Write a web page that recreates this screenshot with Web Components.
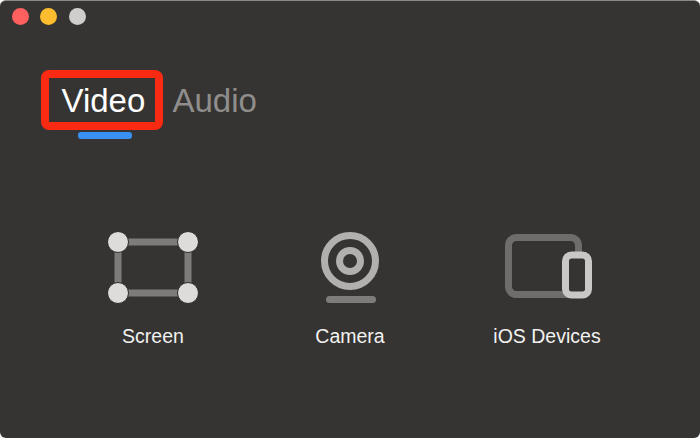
<!DOCTYPE html>
<html lang="en">
<head>
<meta charset="utf-8">
<title>Video</title>
<style>
  html, body { margin: 0; padding: 0; background: #fff; }
</style>
</head>
<body>
<app-window>
  <media-tabs slot="tabs">
    <media-tab active>Video</media-tab>
    <media-tab>Audio</media-tab>
  </media-tabs>
  <source-card label="Screen">
    <svg width="100" height="80" viewBox="0 0 100 80" fill="none">
      <rect x="15" y="15" width="70" height="51" stroke="#7d7c7a" stroke-width="7"/>
      <g fill="#dddcdb" stroke="#2c2b29" stroke-width="1">
        <circle cx="15" cy="15" r="10.5"/>
        <circle cx="85" cy="15" r="10.5"/>
        <circle cx="15" cy="66" r="10.5"/>
        <circle cx="85" cy="66" r="10.5"/>
      </g>
    </svg>
  </source-card>
  <source-card label="Camera">
    <svg width="100" height="80" viewBox="0 0 100 80" fill="none">
      <circle cx="50" cy="34" r="25.5" stroke="#b1b0ae" stroke-width="7"/>
      <circle cx="50" cy="34" r="10.5" stroke="#b1b0ae" stroke-width="7"/>
      <rect x="26" y="69" width="50" height="7" rx="3.5" fill="#7d7c7a"/>
    </svg>
  </source-card>
  <source-card label="iOS Devices">
    <svg width="100" height="80" viewBox="0 0 100 80" fill="none">
      <rect x="11.5" y="10.5" width="70" height="57" rx="8" stroke="#6e6d6b" stroke-width="7"/>
      <rect x="68.5" y="28" width="23" height="40" rx="6" fill="#353432" stroke="#c9c8c6" stroke-width="7"/>
    </svg>
  </source-card>
</app-window>

<script>
// window frame, with the three title bar dots
class AppWindow extends HTMLElement {
    constructor() {
        super();
        this.attachShadow({ mode: "open" });
    }

    connectedCallback() {
        this.shadowRoot.innerHTML = `
      <style>
        * { box-sizing: border-box; }
        :host {
          display: block;
          width: 700px;
          height: 438px;
          font-family: "Liberation Sans", Arial, sans-serif;
        }
        .frame {
          height: 100%;
          background: #353432;
          border-top: 1px solid #8a8987;
          border-radius: 6px;
          padding: 7px 12px 0 11.5px;
        }
        .lights { display: flex; gap: 11.5px; }
        .light { width: 17px; height: 17px; border-radius: 50%; }
        .red { background: #fe5f5f; }
        .yellow { background: #fdbd2e; }
        .grey { background: #cfcecd; }
        .tabs { margin: 45px 0 0 29.5px; }
        .cards {
          display: grid;
          grid-template-columns: 196px 198px 196px;
          margin: 97px 0 0 43.5px;
        }
      </style>
      <div class="frame">
        <div class="lights">
          <div class="light red"></div>
          <div class="light yellow"></div>
          <div class="light grey"></div>
        </div>
        <div class="tabs"><slot name="tabs"></slot></div>
        <div class="cards"><slot></slot></div>
      </div>
    `;
    }
}

class MediaTabs extends HTMLElement {
    constructor() {
        super();
        this.attachShadow({ mode: "open" });
    }

    connectedCallback() {
        this.shadowRoot.innerHTML = `
      <style>
        :host { display: flex; align-items: center; gap: 9.5px; }
      </style>
      <slot></slot>
    `;
    }
}

class MediaTab extends HTMLElement {
    constructor() {
        super();
        this.attachShadow({ mode: "open" });
    }

    connectedCallback() {
        this.shadowRoot.innerHTML = `
      <style>
        :host {
          display: block;
          position: relative;
          box-sizing: border-box;
          height: 60px;
          font-size: 33px;
          line-height: 62px;
          color: #8f8e8c;
        }
        :host([active]) {
          width: 122px;
          padding-left: 12.5px;
          line-height: 46px;
          color: #fff;
          border: 8px solid #fb2a12;
          border-radius: 8px;
        }
        .bar { display: none; }
        :host([active]) .bar {
          display: block;
          position: absolute;
          left: 29px;
          top: 54px;
          width: 54px;
          height: 7px;
          border-radius: 3px;
          background: #3a8ff2;
        }
      </style>
      <slot></slot>
      <div class="bar"></div>
    `;
    }
}

class SourceCard extends HTMLElement {
    constructor() {
        super();
        this.attachShadow({ mode: "open" });
    }

    connectedCallback() {
        const label = this.getAttribute("label") || "";
        this.shadowRoot.innerHTML = `
      <style>
        :host {
          display: flex;
          flex-direction: column;
          align-items: center;
          font-size: 19.5px;
          color: #f2f2f1;
        }
        .icon { height: 80px; }
        .label { margin-top: 17px; line-height: 24px; }
      </style>
      <div class="icon"><slot></slot></div>
      <div class="label">${label}</div>
    `;
    }
}

customElements.define("app-window", AppWindow);
customElements.define("media-tabs", MediaTabs);
customElements.define("media-tab", MediaTab);
customElements.define("source-card", SourceCard);
</script>
</body>
</html>
